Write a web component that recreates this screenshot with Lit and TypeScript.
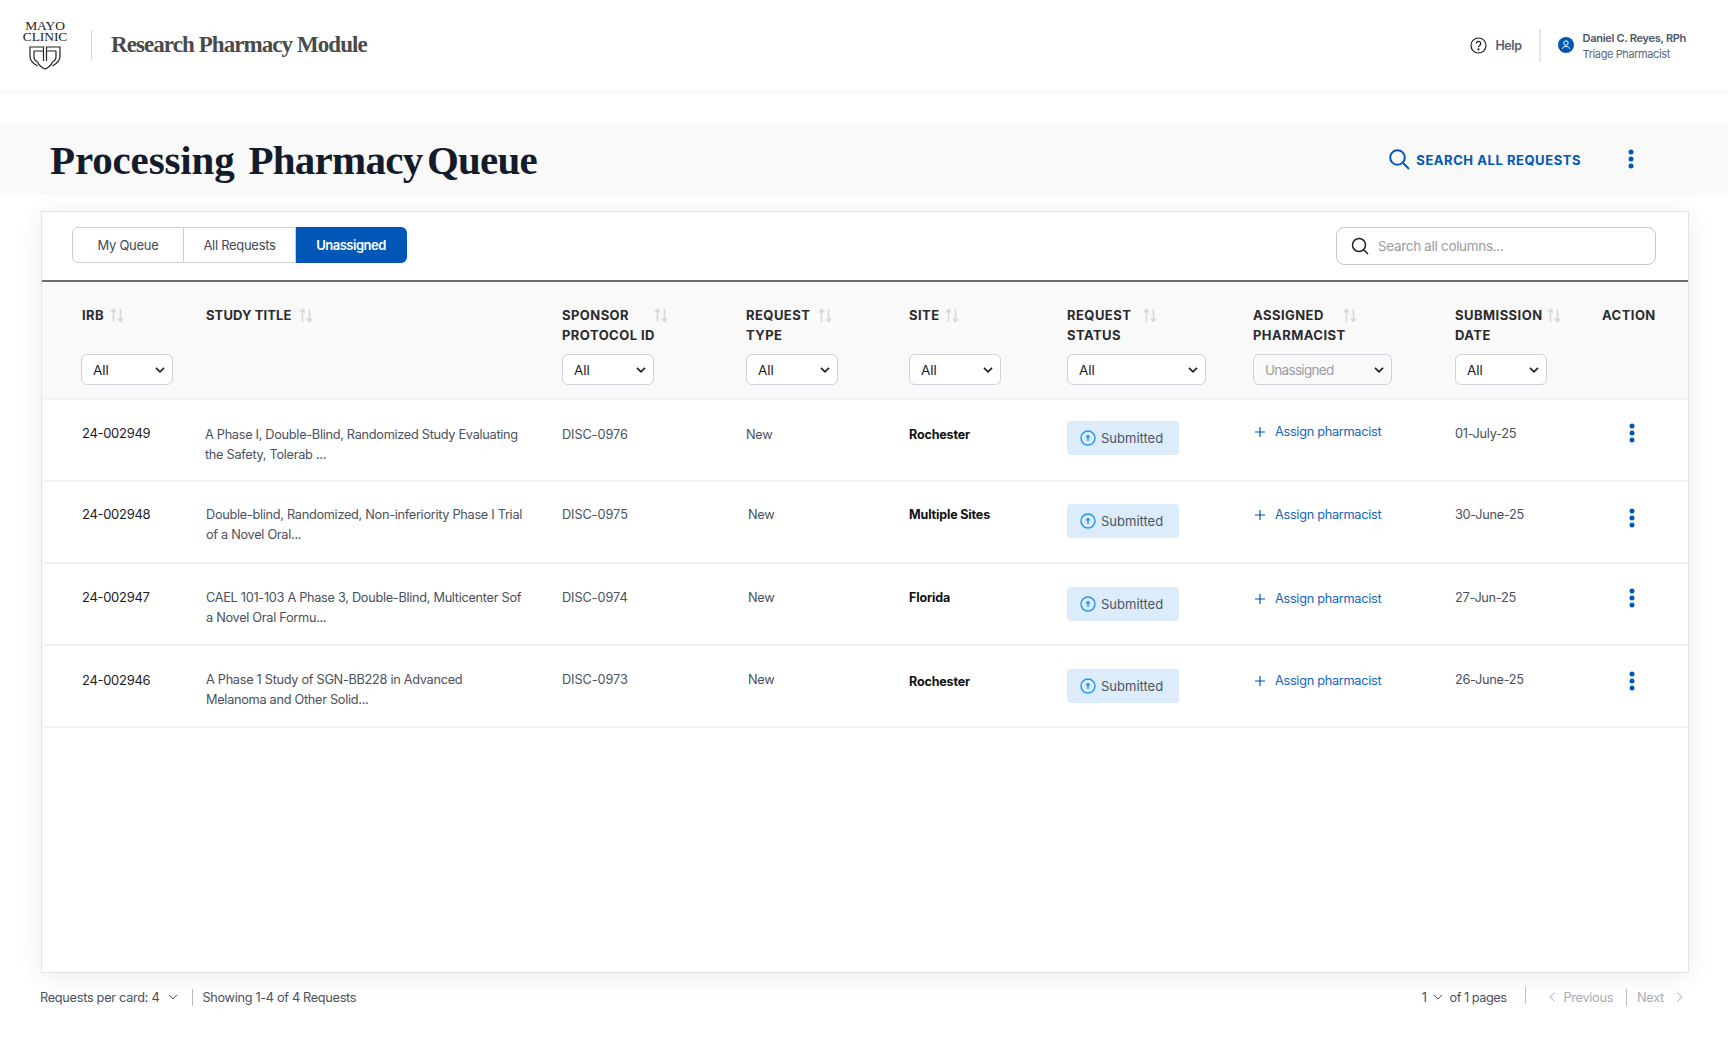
import { LitElement, html, css, svg } from "lit";
import { customElement } from "lit/decorators.js";

const COLS = [
  { lines: ["IRB"], gap: 6, filter: "All", w: 92, x: 1 },
  { lines: ["STUDY TITLE"], gap: 8, x: 1, ls: 0.1 },
  { lines: ["SPONSOR", "PROTOCOL ID"], gap: -1, filter: "All", w: 92 },
  { lines: ["REQUEST", "TYPE"], gap: 8, filter: "All", w: 92 },
  { lines: ["SITE"], gap: 5, filter: "All", w: 92 },
  { lines: ["REQUEST", "STATUS"], gap: 12, filter: "All", w: 139 },
  { lines: ["ASSIGNED", "PHARMACIST"], gap: -3, filter: "Unassigned", w: 139, muted: true },
  { lines: ["SUBMISSION", "DATE"], gap: 4, filter: "All", w: 92 },
  { lines: ["ACTION"], noSort: true },
];

const ROWS = [
  { irb: "24-002949", study: ["A Phase I, Double-Blind, Randomized Study Evaluating", "the Safety, Tolerab ..."], sx: 0, disc: "DISC-0976", nx: 0, site: "Rochester", date: "01-July-25",
    y: { irb: 23, study: 25, disc: 25, type: 25, site: 25, badge: 21, assign: 22, date: 24, dots: 23 } },
  { irb: "24-002948", study: ["Double-blind, Randomized, Non-inferiority Phase I Trial", "of a Novel Oral..."], sx: 1, disc: "DISC-0975", nx: 2, site: "Multiple Sites", date: "30-June-25",
    y: { irb: 22, study: 23, disc: 23, type: 23, site: 23, badge: 22, assign: 23, date: 23, dots: 26 } },
  { irb: "24-002947", study: ["CAEL 101-103 A Phase 3, Double-Blind, Multicenter Sof", "a Novel Oral Formu..."], sx: 1, disc: "DISC-0974", nx: 2, site: "Florida", date: "27-Jun-25",
    y: { irb: 23, study: 24, disc: 24, type: 24, site: 24, badge: 23, assign: 25, date: 24, dots: 24 } },
  { irb: "24-002946", study: ["A Phase 1 Study of SGN-BB228 in Advanced", "Melanoma and Other Solid..."], sx: 1, disc: "DISC-0973", nx: 2, site: "Rochester", date: "26-June-25",
    y: { irb: 24, study: 24, disc: 24, type: 24, site: 26, badge: 23, assign: 25, date: 24, dots: 25 } },
];

const dots = html`<svg class="dots" width="6" height="20" viewBox="0 0 6 20"><circle cx="3" cy="3" r="2.5"/><circle cx="3" cy="10" r="2.5"/><circle cx="3" cy="17" r="2.5"/></svg>`;
const sortIcon = (ml: number) => html`<svg class="sort" style="margin-left:${ml}px" width="14" height="15" viewBox="0 0 14 15" fill="none" stroke="#d6d7d9" stroke-width="1.5"><path d="M3.500 14V1.500M1 4.500l2.500-3 2.500 3"/><path d="M10.500 1v12.500M8 10.500l2.500 3 2.500-3"/></svg>`;
const chev = (w: number, h: number, c: string) => html`<svg width=${w} height=${h} viewBox="0 0 10 6" fill="none" stroke=${c} stroke-width="1"><path d="M1 .8 5 5l4-4.2"/></svg>`;
const shield = svg`
  <path d="M14.500 4.500V1H1v9.500c0 4 3 7 7.500 9.500"/>
  <path d="M17.500 4.500V1H31v9.500c0 4-3 7-7.500 9.500"/>
  <path d="M5 5h9.500v10M5 5v5.500c0 2.500 1.500 4.500 3.500 5.500"/>
  <path d="M27 5h-9.500v10M27 5v5.500c0 2.500-1.500 4.500-3.500 5.500"/>
  <path d="M8.500 16c1.500 3.500 4.500 5.700 7.500 7 3-1.300 6-3.500 7.500-7"/>`;

@customElement("app-root")
export class AppRoot extends LitElement {
  static styles = css`
    :host { display: block; width: 1728px; height: 1040px; background: #fff; font-family: Inter, "Liberation Sans", sans-serif; color: #4a5160; overflow: hidden; font-size: 12.750px; letter-spacing: -.3px; }
    .top { height: 90px; display: flex; align-items: center; padding: 0 42px 0 23px; box-shadow: 0 2px 6px rgba(0,0,0,.05); position: relative; box-sizing: border-box; }
    .logo { width: 44px; display: flex; flex-direction: column; align-items: center; color: #222; font-family: "Liberation Serif", serif; font-size: 13.500px; line-height: 11px; letter-spacing: -.1px; margin-top: -1px; }
    .logo svg { margin-top: 4px; }
    .vr { width: 1px; background: #d5d5d5; height: 30px; margin: 0 19px 0 24px; }
    .module { font-family: "Liberation Serif", serif; font-weight: 700; font-size: 23px; color: #4a4a4a; letter-spacing: -.93px; }
    .spacer { flex: 1; }
    .help { display: flex; align-items: center; gap: 8px; font-weight: 600; font-size: 12.500px; letter-spacing: -.4px; color: #566074; }
    .hr2 { width: 2px; height: 33px; background: #e4e6ea; margin: 0 17px 0 17px; }
    .user { display: flex; align-items: center; gap: 9px; }
    .who { margin-top: 2px; }
    .who b { display: block; font-size: 11px; font-weight: 600; color: #4d5666; line-height: 16px; letter-spacing: -.3px; }
    .who span { display: block; font-size: 11px; color: #5f6775; line-height: 16px; letter-spacing: -.4px; }
    .band { margin-top: 34px; height: 71px; background: #f9f9fa; display: flex; align-items: center; padding: 0 94px 0 50px; }
    .band .dots { margin-top: -2px; }
    h1 { margin: 0; font-family: "Liberation Serif", serif; font-weight: 700; font-size: 41px; color: #141c2b; letter-spacing: -.75px; word-spacing: -5px; }
    h1 .w1 { letter-spacing: -.15px; margin-right: 14px; }
    .sall { display: flex; align-items: center; gap: 6px; color: #0057b8; font-size: 13px; font-weight: 700; letter-spacing: .55px; margin-right: 47px; }
    .dots { fill: #0057b8; display: block; }
    .card { margin: 16px 39px 0 41px; height: 762px; border: 1px solid #e4e4e6; box-sizing: border-box; box-shadow: 0 4px 24px rgba(0,0,0,.08); background: #fff; }
    .tools { height: 68px; display: flex; align-items: flex-start; padding: 15px 32px 0 30px; box-sizing: border-box; justify-content: space-between; }
    .tabs { display: flex; height: 36px; }
    .tab { box-sizing: border-box; border: 1px solid #cfcfd2; border-left: 0; display: flex; align-items: center; justify-content: center; color: #444b58; font-size: 13px; letter-spacing: -.3px; }
    .tab.a { width: 112px; border-left: 1px solid #cfcfd2; border-radius: 6px 0 0 6px; }
    .tab.b { width: 112px; }
    .tab.c { width: 111px; background: #0057b8; border-color: #0057b8; color: #fff; font-weight: 600; border-radius: 0 6px 6px 0; letter-spacing: -.5px; }
    .search { width: 320px; height: 38px; box-sizing: border-box; border: 1px solid #c9c9cc; border-radius: 8px; display: flex; align-items: center; gap: 9px; padding-left: 14px; color: #9b9b9f; font-size: 13.500px; letter-spacing: -.32px; }
    .thead { border-top: 2px solid #6d6d6d; background: #f9f9fa; height: 120px; box-sizing: border-box; padding-top: 23px; border-bottom: 2px solid #f3f3f4; }
    .grid { display: grid; grid-template-columns: 124px 357px 184px 163px 158px 186px 202px 147px 1fr; padding-left: 39px; }
    .label { display: flex; align-items: flex-start; height: 49px; font-size: 13px; line-height: 20px; font-weight: 700; color: #2b2b2e; letter-spacing: .45px; }
    .sort { flex: none; margin-top: 3px; }
    .sel { position: relative; }
    .sel svg { position: absolute; right: 8px; top: 13px; pointer-events: none; }
    select { appearance: none; display: block; box-sizing: border-box; width: 100%; height: 31px; border: 1px solid #d0d0d8; border-radius: 6px; background: #fff; padding: 0 0 0 11px; font: 400 13.500px Inter, sans-serif; color: #222; }
    select.muted { color: #9c9c9f; background: #f9f9fa; letter-spacing: -.7px; }
    .row { height: 82px; box-sizing: border-box; border-bottom: 2px solid #f2f2f3; margin-left: 1px; padding-left: 38px; line-height: 20px; }
    .irb { color: #1c1c1e; font-size: 13px; letter-spacing: -.3px; }
    .t { color: #4a5160; }
    .disc { color: #4a5160; letter-spacing: -.08px; }
    .site { font-size: 12.500px; font-weight: 700; color: #111; letter-spacing: -.15px; }
    .badge { box-sizing: border-box; width: 112px; height: 34px; border-radius: 4px; background: #dcecfb; display: flex; align-items: center; gap: 5px; padding-left: 13px; color: #4b5563; font-size: 13px; letter-spacing: 0; }
    .assign { display: flex; align-items: center; gap: 10px; color: #1565c0; margin-left: 2px; }
    .dotcell { padding-left: 27px; }
    .foot { display: flex; align-items: center; justify-content: space-between; padding: 14px 45px 0 40px; color: #4a5160; }
    .f { display: flex; align-items: center; }
    .sep { width: 1px; height: 17px; background: #b9bec8; }
    .sep.hi { margin-bottom: 3px; }
    .off { color: #a8acb3; }
    .m1 { margin: 0 14px 0 9px; display: flex; }
    .m2 { margin-left: 9px; letter-spacing: -.33px; }
    .m3 { margin: 0 7px 0 6px; display: flex; }
    .pg { letter-spacing: -.5px; }
    .m4 { margin: 0 23px 0 19px; }
    .m5 { margin: 0 13px 0 8px; }
    .m6 { margin: 0 13px 0 10px; }
  `;

  private cell(pad: number, content: unknown, cls = "", x = 0) {
    return html`<div class=${cls} style="padding-top:${pad}px;margin-left:${x}px">${content}</div>`;
  }

  render() {
    return html`
      <header class="top">
        <div class="logo">
          <div>MAYO</div><div>CLINIC</div>
          <svg width="32" height="24" viewBox="0 0 32 24" fill="none" stroke="#222" stroke-width="1.200">${shield}</svg>
        </div>
        <div class="vr"></div>
        <div class="module">Research Pharmacy Module</div>
        <div class="spacer"></div>
        <div class="help">
          <svg width="17" height="17" viewBox="0 0 17 17" fill="none" stroke="#222" stroke-width="1.200"><circle cx="8.500" cy="8.500" r="7.500"/><path d="M6.300 6.500a2.200 2.200 0 1 1 3.400 1.900c-.8.5-1.200.9-1.200 1.800"/><circle cx="8.500" cy="12.300" r=".5" fill="#222"/></svg>
          Help
        </div>
        <div class="hr2"></div>
        <div class="user">
          <svg width="16" height="16" viewBox="0 0 16 16"><circle cx="8" cy="8" r="8" fill="#0057b8"/><circle cx="8" cy="6" r="2.200" fill="none" stroke="#fff" stroke-width="1"/><path d="M4.300 11.800c.4-1.800 2-2.300 3.700-2.300s3.300.5 3.700 2.300" fill="none" stroke="#fff" stroke-width="1"/></svg>
          <div class="who"><b>Daniel C. Reyes, RPh</b><span>Triage Pharmacist</span></div>
        </div>
      </header>

      <section class="band">
        <h1><span class="w1">Processing</span><span>Pharmacy Queue</span></h1>
        <div class="spacer"></div>
        <div class="sall">
          <svg width="21" height="21" viewBox="0 0 21 21" fill="none" stroke="#0057b8" stroke-width="2"><circle cx="8.500" cy="8.500" r="7.300"/><path d="M14 14l6 6"/></svg>
          SEARCH ALL REQUESTS
        </div>
        ${dots}
      </section>

      <main class="card">
        <div class="tools">
          <div class="tabs"><div class="tab a">My Queue</div><div class="tab b">All Requests</div><div class="tab c">Unassigned</div></div>
          <div class="search">
            <svg width="18" height="18" viewBox="0 0 18 18" fill="none" stroke="#222" stroke-width="1.500"><circle cx="8" cy="8" r="6.500"/><path d="M12.800 12.800l4.200 4.200"/></svg>
            Search all columns...
          </div>
        </div>
        <div class="thead grid">
          ${COLS.map((c) => html`<div>
            <div class="label" style="margin-left:${c.x ?? 0}px;letter-spacing:${c.ls ?? 0.45}px">
              <div>${c.lines.map((l) => html`<div>${l}</div>`)}</div>
              ${c.noSort ? "" : sortIcon(c.gap ?? 0)}
            </div>
            ${c.filter ? html`<div class="sel" style="width:${c.w}px">
              <select class=${c.muted ? "muted" : ""}><option>${c.filter}</option></select>
              <svg width="10" height="6" viewBox="0 0 10 6" fill="none" stroke="#222" stroke-width="1.700"><path d="M1 .8 5 4.800 9 .8"/></svg>
            </div>` : ""}
          </div>`)}
        </div>
        ${ROWS.map((r) => html`<div class="row grid">
          ${this.cell(r.y.irb, r.irb, "irb", 1)}
          ${this.cell(r.y.study, r.study.map((l) => html`<div>${l}</div>`), "t", r.sx)}
          ${this.cell(r.y.disc, r.disc, "disc")}
          ${this.cell(r.y.type, "New", "t", r.nx)}
          ${this.cell(r.y.site, r.site, "site")}
          ${this.cell(r.y.badge, html`<div class="badge">
            <svg width="16" height="16" viewBox="0 0 16 16" fill="none" stroke="#2196f3" stroke-width="1.400"><circle cx="8" cy="8" r="7"/><path d="M8 11V6M6.200 7.500 8 5.500l1.800 2"/></svg>Submitted</div>`)}
          ${this.cell(r.y.assign, html`<div class="assign"><svg width="10" height="10" viewBox="0 0 10 10" stroke="#0057b8" stroke-width="1.200"><path d="M5 0v10M0 5h10"/></svg>Assign pharmacist</div>`)}
          ${this.cell(r.y.date, r.date, "t")}
          ${this.cell(r.y.dots, dots, "dotcell")}
        </div>`)}
      </main>

      <footer class="foot">
        <div class="f">
          <span>Requests per card: 4</span>
          <span class="m1">${chev(10, 6, "#4a5160")}</span>
          <span class="sep"></span>
          <span class="m2">Showing 1-4 of 4 Requests</span>
        </div>
        <div class="f">
          <span>1</span>
          <span class="m3">${chev(10, 6, "#4a5160")}</span>
          <span class="pg">of 1 pages</span>
          <span class="sep hi m4"></span>
          <svg width="6" height="10" viewBox="0 0 6 10" fill="none" stroke="#a8acb3"><path d="M5.500.5 1 5l4.500 4.500"/></svg>
          <span class="off m5">Previous</span>
          <span class="sep"></span>
          <span class="off m6">Next</span>
          <svg width="6" height="10" viewBox="0 0 6 10" fill="none" stroke="#a8acb3"><path d="M.5.500 5 5 .5 9.500"/></svg>
        </div>
      </footer>
    `;
  }
}
